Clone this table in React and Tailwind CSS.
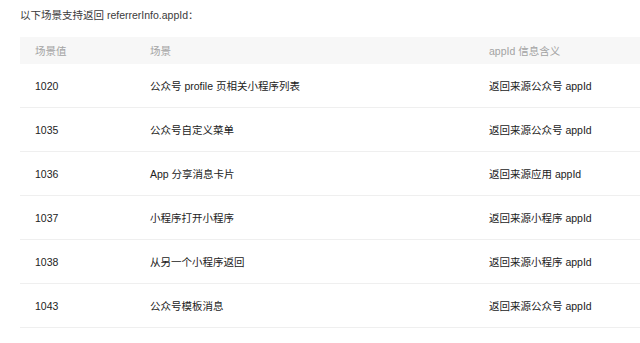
import React from "react";

const rows = [
  ["1020", "公众号 profile 页相关小程序列表", "返回来源公众号 appId"],
  ["1035", "公众号自定义菜单", "返回来源公众号 appId"],
  ["1036", "App 分享消息卡片", "返回来源应用 appId"],
  ["1037", "小程序打开小程序", "返回来源小程序 appId"],
  ["1038", "从另一个小程序返回", "返回来源小程序 appId"],
  ["1043", "公众号模板消息", "返回来源公众号 appId"],
];

export default function App() {
  return (
    <div
      className="w-[640px] h-[343px] bg-white overflow-hidden text-[10.5px] text-[#222]"
      style={{ fontFamily: '"Liberation Sans", "Noto Sans CJK SC", sans-serif' }}
    >
      <div className="h-[37px] pl-[20px] pt-[8px] leading-[14px] text-[#3a3a3a]">
        以下场景支持返回 referrerInfo.appId：
      </div>
      <div className="ml-[20px] w-[640px]">
        <div className="grid grid-cols-[115px_339px_1fr] h-[27px] items-center bg-[#f7f7f7] text-[#a3a3a3] leading-[14px]">
          <div className="pl-[15px]">场景值</div>
          <div className="pl-[15px]">场景</div>
          <div className="pl-[15px]">appId 信息含义</div>
        </div>
        {rows.map((r) => (
          <div
            key={r[0]}
            className="grid grid-cols-[115px_339px_1fr] h-[44px] items-center border-b border-[#efefef] leading-[14px]"
          >
            <div className="pl-[15px]">{r[0]}</div>
            <div className="pl-[15px]">{r[1]}</div>
            <div className="pl-[15px]">{r[2]}</div>
          </div>
        ))}
      </div>
    </div>
  );
}
